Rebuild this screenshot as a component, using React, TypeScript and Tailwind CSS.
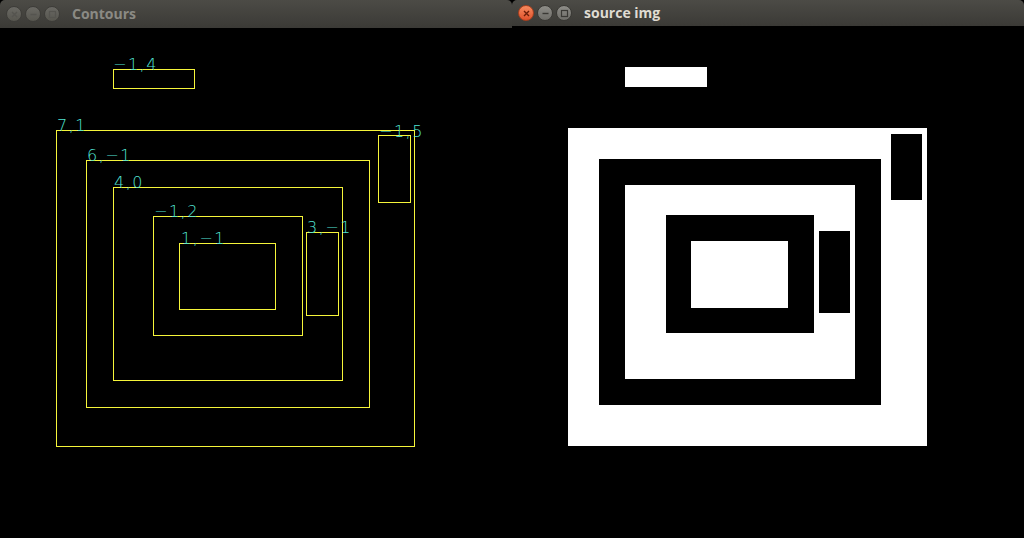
import type { ReactNode } from 'react'

type Rect = { x1: number; y1: number; x2: number; y2: number }
type Label = { text: string; x: number; y: number }

const CONTOURS: Rect[] = [
  { x1: 113, y1: 69, x2: 194, y2: 88 },
  { x1: 56, y1: 130, x2: 414, y2: 446 },
  { x1: 378, y1: 135, x2: 410, y2: 202 },
  { x1: 86, y1: 160, x2: 369, y2: 407 },
  { x1: 113, y1: 187, x2: 342, y2: 380 },
  { x1: 153, y1: 216, x2: 302, y2: 335 },
  { x1: 179, y1: 243, x2: 275, y2: 309 },
  { x1: 306, y1: 232, x2: 338, y2: 315 },
]

const LABELS: Label[] = [
  { text: '−1,4', x: 113, y: 70 },
  { text: '7,1', x: 57, y: 131 },
  { text: '−1,5', x: 379, y: 137 },
  { text: '6,−1', x: 87, y: 161 },
  { text: '4,0', x: 114, y: 188 },
  { text: '−1,2', x: 154, y: 217 },
  { text: '1,−1', x: 181, y: 244 },
  { text: '3,−1', x: 307, y: 233 },
]

// source image: fills painted in order, outermost first
const SOURCE: (Rect & { fill: string })[] = [
  { x1: 625, y1: 67, x2: 707, y2: 87, fill: '#fff' },
  { x1: 568, y1: 128, x2: 927, y2: 446, fill: '#fff' },
  { x1: 599, y1: 159, x2: 881, y2: 405, fill: '#000' },
  { x1: 625, y1: 185, x2: 855, y2: 379, fill: '#fff' },
  { x1: 666, y1: 215, x2: 814, y2: 333, fill: '#000' },
  { x1: 691, y1: 241, x2: 788, y2: 308, fill: '#fff' },
  { x1: 819, y1: 231, x2: 850, y2: 313, fill: '#000' },
  { x1: 891, y1: 134, x2: 922, y2: 200, fill: '#000' },
]

function WinButton({ kind, active }: { kind: 'close' | 'min' | 'max'; active: boolean }) {
  const isClose = kind === 'close' && active
  const glyph = active ? '#3a3935' : '#55544f'
  return (
    <div
      className={
        isClose
          ? 'w-[16px] h-[16px] rounded-full bg-gradient-to-b from-[#f68a5e] to-[#e0502a] border border-[#a9401f] flex items-center justify-center'
          : active
            ? 'w-[16px] h-[16px] rounded-full bg-gradient-to-b from-[#8e8d88] to-[#6e6d68] border border-[#3a3935] flex items-center justify-center'
            : 'w-[16px] h-[16px] rounded-full bg-gradient-to-b from-[#6a6964] to-[#57564f] border border-[#3e3d39] flex items-center justify-center'
      }
    >
      <svg width="9" height="9" viewBox="0 0 9 9">
        {kind === 'close' && (
          <path d="M2 2 L7 7 M7 2 L2 7" stroke={isClose ? '#6b1d08' : glyph} strokeWidth="1.4" />
        )}
        {kind === 'min' && <path d="M1.5 4.5 H7.5" stroke={glyph} strokeWidth="1.4" />}
        {kind === 'max' && <rect x="1.5" y="1.5" width="6" height="6" fill="none" stroke={glyph} strokeWidth="1.2" />}
      </svg>
    </div>
  )
}

function Window({
  title,
  active,
  barHeight,
  children,
}: {
  title: string
  active: boolean
  barHeight: string
  children: ReactNode
}) {
  return (
    <div className="flex flex-col w-[512px] h-full bg-black">
      <div
        className={`${barHeight} shrink-0 flex items-center gap-[3px] pl-[6px] bg-gradient-to-b from-[#4c4b46] to-[#3b3a36] rounded-t-[5px]`}
      >
        <WinButton kind="close" active={active} />
        <WinButton kind="min" active={active} />
        <WinButton kind="max" active={active} />
        <span
          className={`ml-[9px] text-[14px] font-bold leading-none ${active ? 'text-[#dfdbd2]' : 'text-[#8b8a84]'}`}
          style={{ fontFamily: '"Open Sans", "DejaVu Sans", sans-serif' }}
        >
          {title}
        </span>
      </div>
      <div className="flex-1 bg-black overflow-hidden">{children}</div>
    </div>
  )
}

export default function App() {
  return (
    <div className="w-[1024px] h-[538px] flex bg-black overflow-hidden">
      <Window title="Contours" active={false} barHeight="h-[28px]">
        <svg width="512" height="510" viewBox="0 28 512 510" className="block">
          {CONTOURS.map((r, i) => (
            <rect
              key={i}
              x={r.x1 + 0.5}
              y={r.y1 + 0.5}
              width={r.x2 - r.x1}
              height={r.y2 - r.y1}
              fill="none"
              stroke="#f6f53a"
              strokeWidth="1"
            />
          ))}
          {LABELS.map((l, i) => (
            <text
              key={i}
              x={l.x}
              y={l.y}
              fill="#52e4d4"
              fontSize="16"
              letterSpacing="1.5"
              style={{ fontFamily: '"DejaVu Sans", sans-serif', fontWeight: 300 }}
            >
              {l.text}
            </text>
          ))}
        </svg>
      </Window>
      <Window title="source img" active={true} barHeight="h-[26px]">
        <svg width="512" height="512" viewBox="512 26 512 512" className="block">
          {SOURCE.map((r, i) => (
            <rect key={i} x={r.x1} y={r.y1} width={r.x2 - r.x1} height={r.y2 - r.y1} fill={r.fill} />
          ))}
        </svg>
      </Window>
    </div>
  )
}
